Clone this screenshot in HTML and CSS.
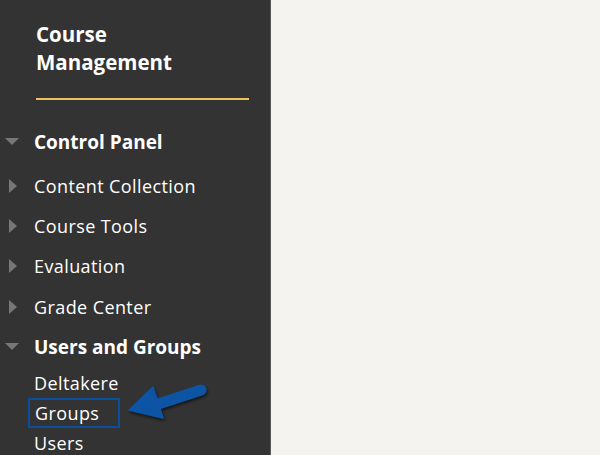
FILE: index.html
```html
<!DOCTYPE html>
<html lang="en">
<head>
  <meta charset="UTF-8">
  <title>Course Management</title>
  <link rel="stylesheet" href="styles.css">
</head>
<body>
  <div class="layout">
    <nav class="sidebar">
      <h2 class="title">Course<br>Management</h2>
      <div class="rule"></div>

      <ul class="menu">
        <li class="menu-item open first"><span class="caret down"></span>Control Panel</li>
        <li class="menu-item"><span class="caret right"></span>Content Collection</li>
        <li class="menu-item"><span class="caret right"></span>Course Tools</li>
        <li class="menu-item"><span class="caret right"></span>Evaluation</li>
        <li class="menu-item"><span class="caret right"></span>Grade Center</li>
        <li class="menu-item open"><span class="caret down"></span>Users and Groups</li>
      </ul>

      <ul class="submenu">
        <li>Deltakere</li>
        <li><span class="highlight">Groups</span></li>
        <li>Users</li>
      </ul>

      <!-- callout arrow pointing at Groups -->
      <svg class="arrow" width="100" height="50" viewBox="0 0 100 50">
        <defs>
          <filter id="shadow" x="-20%" y="-40%" width="140%" height="180%">
            <feDropShadow dx="1" dy="2" stdDeviation="1.5" flood-color="#000" flood-opacity="0.6"/>
          </filter>
        </defs>
        <g filter="url(#shadow)" fill="#0a54a4" stroke="#0a54a4">
          <line x1="38" y1="24" x2="81" y2="10" stroke-width="11" stroke-linecap="round"/>
          <polygon points="9,30 33,7 43,38" stroke-width="1.5" stroke-linejoin="round"/>
        </g>
      </svg>
    </nav>
    <main class="content"></main>
  </div>
</body>
</html>
```

FILE: styles.css
```css
html, body {
  margin: 0;
  padding: 0;
  height: 100%;
}
body {
  font-family: "Open Sans", Arial, sans-serif;
  background-color: #f4f3ef;
}
.layout {
  display: flex;
  height: 455px;
}
.sidebar {
  position: relative;
  width: 270px;
  background-color: #333333;
  border-right: 1px solid #5a5a5a;
  color: #ffffff;
  overflow: hidden;
}
.content {
  flex: 1;
  background-color: #f4f3ef;
}
.title {
  margin: 20px 0 0 36px;
  font-size: 20.5px;
  font-weight: bold;
  line-height: 28px;
}
.rule {
  margin: 22px 21px 0 36px;
  height: 2px;
  background-color: #ecc35a;
}
.menu {
  list-style: none;
  margin: 21.5px 0 0 0;
  padding: 0;
}
.menu-item {
  display: flex;
  align-items: center;
  height: 40.4px;
  font-size: 18px;
  letter-spacing: 0.4px;
}
.menu-item.first {
  margin-bottom: 3.5px;
}
.menu-item.open {
  font-weight: bold;
  font-size: 19px;
  letter-spacing: 0;
}
.caret {
  width: 34px;
  display: inline-block;
  position: relative;
  height: 14px;
}
.caret.down::before {
  content: "";
  position: absolute;
  left: 5px;
  top: 3px;
  border-left: 7.5px solid transparent;
  border-right: 7.5px solid transparent;
  border-top: 7px solid #777777;
}
.caret.right::before {
  content: "";
  position: absolute;
  left: 9px;
  top: 0;
  border-top: 7px solid transparent;
  border-bottom: 7px solid transparent;
  border-left: 8px solid #777777;
}
.submenu {
  list-style: none;
  margin: 1px 0 0 0;
  padding: 0 0 0 34px;
}
.submenu li {
  height: 30px;
  line-height: 30px;
  font-size: 18px;
  letter-spacing: 0.4px;
}
.highlight {
  display: inline-block;
  margin-left: -6px;
  padding: 0 19px 0 5px;
  line-height: 26px;
  border: 2px solid #0a4f9e;
}
.arrow {
  position: absolute;
  left: 120px;
  top: 380px;
}
```
